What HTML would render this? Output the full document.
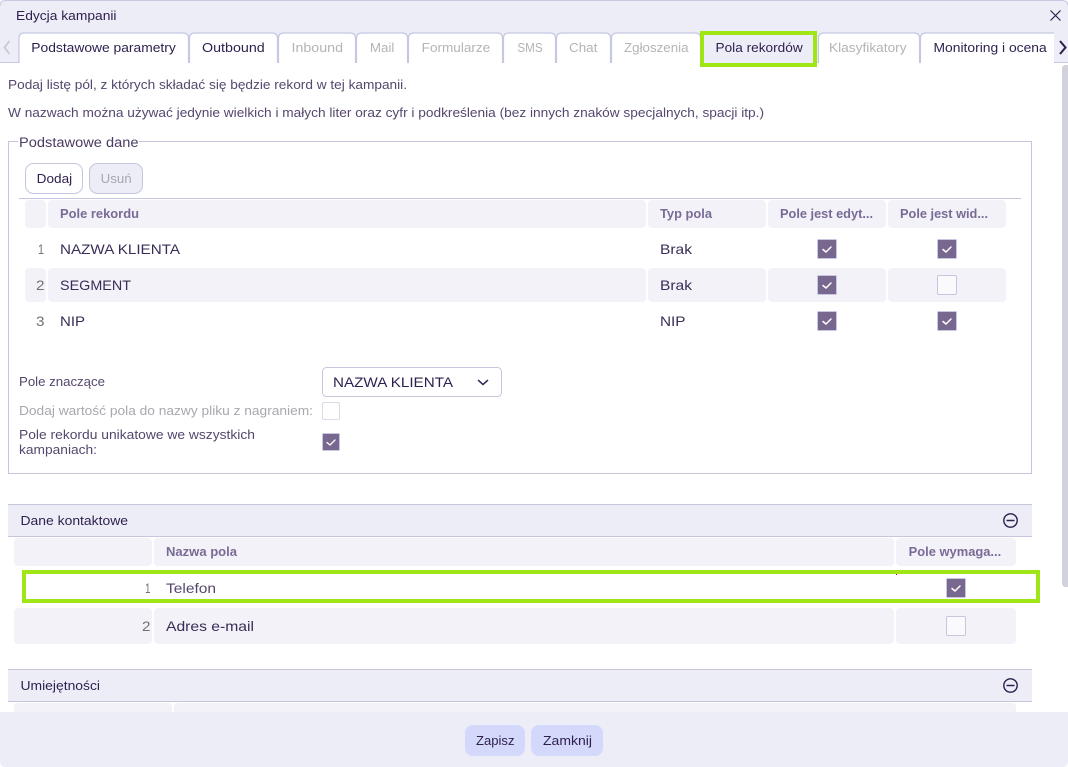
<!DOCTYPE html>
<html lang="pl">
<head>
<meta charset="utf-8">
<title>Edycja kampanii</title>
<style>
html,body{margin:0;padding:0;background:#fff;width:1068px;height:767px;overflow:hidden}
svg{display:block}
text{font-family:"Liberation Sans",Arial,sans-serif;font-size:13px;fill:#2d1f4e;white-space:pre}
.t{font-size:13px}
.d{fill:#b4b4b8}
.p{fill:#56476d}
.h{fill:#7a6b96;font-weight:bold;font-size:12.5px}
.r{font-size:14px;fill:#3a2c57}
.n{font-size:14px;fill:#707078}
.l{fill:#56476d;font-size:12.5px}
.cell{fill:#f2f2f8}
.cb{fill:#78688f;stroke:#c5c6e0;stroke-width:1}
.cu{fill:#fafafd;stroke:#c5c6e0;stroke-width:1}
.ck{fill:none;stroke:#fff;stroke-width:1.5;stroke-linecap:round;stroke-linejoin:round}
.tab{fill:#fff;stroke:#c5c8e2;stroke-width:1.2}
.ln{stroke:#c5c6dc;stroke-width:1}
</style>
</head>
<body>
<svg xmlns="http://www.w3.org/2000/svg" width="1068" height="767" viewBox="0 0 1068 767">
<rect width="1068" height="767" fill="#fff"/>
<!-- title bar -->
<path d="M0 62V6Q0 0 6 0H1062Q1068 0 1068 6V62Z" fill="#ecedf6"/>
<path d="M0 6Q0 .5 6 .5H1062Q1068 .5 1068 6" fill="none" stroke="#c5c8e2"/>
<text x="16" y="20" textLength="100.500" lengthAdjust="spacingAndGlyphs" class="t">Edycja kampanii</text>
<path d="M1050.500 10.500l10 10M1060.500 10.500l-10 10" stroke="#2d1f4e" stroke-width="1.200" fill="none"/>
<!-- tabs -->
<rect x="0" y="62" width="1068" height="1" fill="#c5c8e2"/>
<path d="M9.500 41l-5 6.500 5 6.500" fill="none" stroke="#c9c9d2" stroke-width="1.800"/>
<path class="tab" d="M19 63V38Q19 33 24 33H183Q188.500 33 188.500 38V63"/>
<path class="tab" d="M189.500 63V38Q189.500 33 195 33H272Q277.500 33 277.500 38V63"/>
<path class="tab" d="M278.500 63V38Q278.500 33 284 33H350Q355.500 33 355.500 38V63"/>
<path class="tab" d="M356.500 63V38Q356.500 33 362 33H402Q407.500 33 407.500 38V63"/>
<path class="tab" d="M408.500 63V38Q408.500 33 414 33H497Q502.500 33 502.500 38V63"/>
<path class="tab" d="M503.500 63V38Q503.500 33 509 33H550Q555.500 33 555.500 38V63"/>
<path class="tab" d="M556.500 63V38Q556.500 33 562 33H605Q610.500 33 610.500 38V63"/>
<path class="tab" d="M611.500 63V38Q611.500 33 617 33H695Q700.500 33 700.500 38V63"/>
<path class="tab" d="M818.500 63V38Q818.500 33 824 33H914Q919.500 33 919.500 38V63"/>
<path d="M920.500 63V38Q920.500 33 926 33H1054V63Z" fill="#fff"/>
<path d="M920.500 63V38Q920.500 33 926 33H1054" fill="none" stroke="#c5c8e2" stroke-width="1.200"/>
<rect x="702" y="33" width="113" height="32" fill="#ecedf6" stroke="#a0e515" stroke-width="4"/>
<rect x="0" y="63" width="1068" height="649" fill="#fff"/>
<rect x="700" y="63" width="117" height="4" fill="#a0e515"/>
<rect x="704" y="62" width="109" height="1" fill="#ecedf6"/>
<text x="31.300" y="52" textLength="144.500" lengthAdjust="spacingAndGlyphs" class="t">Podstawowe parametry</text>
<text x="202" y="52" textLength="62.700" lengthAdjust="spacingAndGlyphs" class="t">Outbound</text>
<text x="291.500" y="52" textLength="51.500" lengthAdjust="spacingAndGlyphs" class="d">Inbound</text>
<text x="369.900" y="52" textLength="24.500" lengthAdjust="spacingAndGlyphs" class="d">Mail</text>
<text x="421.700" y="52" textLength="68.500" lengthAdjust="spacingAndGlyphs" class="d">Formularze</text>
<text x="517.400" y="52" textLength="25.200" lengthAdjust="spacingAndGlyphs" class="d">SMS</text>
<text x="569" y="52" textLength="28.400" lengthAdjust="spacingAndGlyphs" class="d">Chat</text>
<text x="624" y="52" textLength="64.500" lengthAdjust="spacingAndGlyphs" class="d">Zgłoszenia</text>
<text x="715.500" y="52" textLength="87.200" lengthAdjust="spacingAndGlyphs" class="t">Pola rekordów</text>
<text x="829" y="52" textLength="77.600" lengthAdjust="spacingAndGlyphs" class="d">Klasyfikatory</text>
<text x="933.500" y="52" textLength="113.200" lengthAdjust="spacingAndGlyphs" class="t">Monitoring i ocena</text>
<path d="M1060 41l5.500 6.500-5.500 6.500" fill="none" stroke="#2d1f4e" stroke-width="2"/>
<!-- scrollbar -->
<path d="M1068 65H1066Q1062 65 1062 69V583Q1062 587 1066 587H1068Z" fill="#d2d2dc"/>
<!-- intro -->
<text x="8" y="89" textLength="399" lengthAdjust="spacingAndGlyphs" class="p">Podaj listę pól, z których składać się będzie rekord w tej kampanii.</text>
<text x="8" y="117" textLength="756" lengthAdjust="spacingAndGlyphs" class="p">W nazwach można używać jedynie wielkich i małych liter oraz cyfr i podkreślenia (bez innych znaków specjalnych, spacji itp.)</text>
<!-- fieldset -->
<path d="M18 141.500H8.500V473.500H1031.500V141.500H139" fill="none" stroke="#c5c6dc"/>
<text x="19" y="147" textLength="119.500" lengthAdjust="spacingAndGlyphs" style="font-size:13.500px;fill:#4a3c62">Podstawowe dane</text>
<rect x="25.500" y="163.500" width="57" height="30" rx="8" fill="#fff" stroke="#c5c6e0"/>
<text x="36.700" y="183" textLength="35.500" lengthAdjust="spacingAndGlyphs" class="t">Dodaj</text>
<rect x="89.500" y="163.500" width="53" height="30" rx="8" fill="#ecedf6" stroke="#c5c6dc"/>
<text x="100.700" y="183" textLength="31" lengthAdjust="spacingAndGlyphs" class="d" style="fill:#a7a7b0">Usuń</text>
<rect x="19" y="198" width="1002" height="1" fill="#c5c6e0"/>
<!-- table 1 -->
<rect class="cell" x="25" y="200" width="21" height="28" rx="4"/>
<rect class="cell" x="48" y="200" width="598" height="28" rx="4"/>
<rect class="cell" x="648" y="200" width="118" height="28" rx="4"/>
<rect class="cell" x="768" y="200" width="118" height="28" rx="4"/>
<rect class="cell" x="888" y="200" width="118" height="28" rx="4"/>
<text x="60" y="218" textLength="79" lengthAdjust="spacingAndGlyphs" class="h">Pole rekordu</text>
<text x="660" y="218" textLength="52" lengthAdjust="spacingAndGlyphs" class="h">Typ pola</text>
<text x="780" y="218" textLength="93" lengthAdjust="spacingAndGlyphs" class="h">Pole jest edyt...</text>
<text x="900" y="218" textLength="88" lengthAdjust="spacingAndGlyphs" class="h">Pole jest wid...</text>
<rect class="cell" x="25" y="268" width="21" height="34" rx="4"/>
<rect class="cell" x="48" y="268" width="598" height="34" rx="4"/>
<rect class="cell" x="648" y="268" width="118" height="34" rx="4"/>
<rect class="cell" x="768" y="268" width="118" height="34" rx="4"/>
<rect class="cell" x="888" y="268" width="118" height="34" rx="4"/>
<text x="38" y="254" textLength="6" lengthAdjust="spacingAndGlyphs" class="n">1</text>
<text x="36" y="290" textLength="8.500" lengthAdjust="spacingAndGlyphs" class="n">2</text>
<text x="36" y="326" textLength="8.500" lengthAdjust="spacingAndGlyphs" class="n">3</text>
<text x="60" y="254" textLength="120" lengthAdjust="spacingAndGlyphs" class="r">NAZWA KLIENTA</text>
<text x="60" y="290" textLength="71" lengthAdjust="spacingAndGlyphs" class="r">SEGMENT</text>
<text x="60" y="326" textLength="25" lengthAdjust="spacingAndGlyphs" class="r">NIP</text>
<text x="660" y="254" textLength="32" lengthAdjust="spacingAndGlyphs" class="r">Brak</text>
<text x="660" y="290" textLength="32" lengthAdjust="spacingAndGlyphs" class="r">Brak</text>
<text x="660" y="326" textLength="25.500" lengthAdjust="spacingAndGlyphs" class="r">NIP</text>
<rect class="cb" x="817.500" y="239.500" width="19" height="19" rx="1"/><path class="ck" d="M823 249.500l3 2.500 5-5"/>
<rect class="cb" x="937.500" y="239.500" width="19" height="19" rx="1"/><path class="ck" d="M943 249.500l3 2.500 5-5"/>
<rect class="cb" x="817.500" y="275.500" width="19" height="19" rx="1"/><path class="ck" d="M823 285.500l3 2.500 5-5"/>
<rect class="cu" x="937.500" y="275.500" width="19" height="19" rx="1.500"/>
<rect class="cb" x="817.500" y="311.500" width="19" height="19" rx="1"/><path class="ck" d="M823 321.500l3 2.500 5-5"/>
<rect class="cb" x="937.500" y="311.500" width="19" height="19" rx="1"/><path class="ck" d="M943 321.500l3 2.500 5-5"/>
<!-- form -->
<text x="19" y="386" textLength="86" lengthAdjust="spacingAndGlyphs" class="l">Pole znaczące</text>
<rect x="322.500" y="367.500" width="179" height="29" rx="4" fill="#fff" stroke="#c5c6e0"/>
<text x="333" y="387" textLength="120" lengthAdjust="spacingAndGlyphs" style="font-size:14px">NAZWA KLIENTA</text>
<path d="M478 380l5 4.500 5-4.500" fill="none" stroke="#2d1f4e" stroke-width="1.500"/>
<text x="19" y="415" textLength="294" lengthAdjust="spacingAndGlyphs" class="l" style="fill:#a8a8ae">Dodaj wartość pola do nazwy pliku z nagraniem:</text>
<rect x="322.500" y="402.500" width="17" height="17" rx="1.500" fill="#fff" stroke="#dcdce8"/>
<text x="19" y="439" textLength="236" lengthAdjust="spacingAndGlyphs" class="l">Pole rekordu unikatowe we wszystkich</text>
<text x="19" y="454" textLength="78" lengthAdjust="spacingAndGlyphs" class="l">kampaniach:</text>
<rect class="cb" x="322.500" y="433.500" width="17" height="17" rx="1"/><path class="ck" d="M327 442.500l3 2.500 5-5" style="stroke-width:1.300"/>
<!-- Dane kontaktowe -->
<rect x="8" y="504" width="1024" height="33" fill="#ecedf6"/>
<rect x="8" y="504" width="1024" height="1" fill="#c5c6dc"/>
<rect x="8" y="536" width="1024" height="1" fill="#c5c6dc"/>
<text x="20.500" y="525" textLength="107.500" lengthAdjust="spacingAndGlyphs" class="t">Dane kontaktowe</text>
<circle cx="1010.500" cy="520.500" r="6.700" fill="none" stroke="#2d1f4e" stroke-width="1.400"/>
<path d="M1006.500 520.500h8" stroke="#2d1f4e" stroke-width="1.500"/>
<rect class="cell" x="14" y="538" width="138" height="28" rx="4"/>
<rect class="cell" x="154" y="538" width="740" height="28" rx="4"/>
<rect class="cell" x="896" y="538" width="120" height="28" rx="4"/>
<text x="166" y="556" textLength="71" lengthAdjust="spacingAndGlyphs" class="h">Nazwa pola</text>
<text x="908.700" y="556" textLength="92.500" lengthAdjust="spacingAndGlyphs" class="h">Pole wymaga...</text>
<rect x="24" y="572" width="1014" height="29" fill="#fff" stroke="#a0e515" stroke-width="4"/>
<rect x="896" y="574" width="1" height="1" fill="#b01010"/>
<text x="145" y="593" textLength="5.500" lengthAdjust="spacingAndGlyphs" class="n">1</text>
<text x="166" y="593" textLength="50" lengthAdjust="spacingAndGlyphs" class="r" style="fill:#56476d">Telefon</text>
<rect class="cb" x="946.500" y="578.500" width="19" height="19" rx="1"/><path class="ck" d="M952 588.500l3 2.500 5-5"/>
<rect class="cell" x="14" y="608" width="138" height="36" rx="4"/>
<rect class="cell" x="154" y="608" width="740" height="36" rx="4"/>
<rect class="cell" x="896" y="608" width="120" height="36" rx="4"/>
<text x="142" y="631" textLength="8.500" lengthAdjust="spacingAndGlyphs" class="n">2</text>
<text x="166" y="631" textLength="88" lengthAdjust="spacingAndGlyphs" class="r">Adres e-mail</text>
<rect class="cu" x="946.500" y="616.500" width="19" height="19" rx="1.500"/>
<!-- Umiejetnosci -->
<rect x="8" y="669" width="1024" height="33" fill="#ecedf6"/>
<rect x="8" y="669" width="1024" height="1" fill="#c5c6dc"/>
<rect x="8" y="701" width="1024" height="1" fill="#c5c6dc"/>
<text x="20.500" y="690" textLength="79.500" lengthAdjust="spacingAndGlyphs" class="t">Umiejętności</text>
<circle cx="1010.500" cy="685.500" r="6.700" fill="none" stroke="#2d1f4e" stroke-width="1.400"/>
<path d="M1006.500 685.500h8" stroke="#2d1f4e" stroke-width="1.500"/>
<rect class="cell" x="14" y="703" width="158" height="20" rx="4"/>
<rect class="cell" x="174" y="703" width="842" height="20" rx="4"/>
<!-- footer -->
<path d="M0 712H1068V761Q1068 767 1062 767H6Q0 767 0 761Z" fill="#ecedf6"/>
<rect x="465" y="725" width="60" height="31" rx="8" fill="#d4d8fa"/>
<rect x="531" y="725" width="72" height="31" rx="8" fill="#d4d8fa"/>
<text x="476" y="745" textLength="38.500" lengthAdjust="spacingAndGlyphs" class="t">Zapisz</text>
<text x="543" y="745" textLength="49" lengthAdjust="spacingAndGlyphs" class="t">Zamknij</text>
</svg>
</body>
</html>
